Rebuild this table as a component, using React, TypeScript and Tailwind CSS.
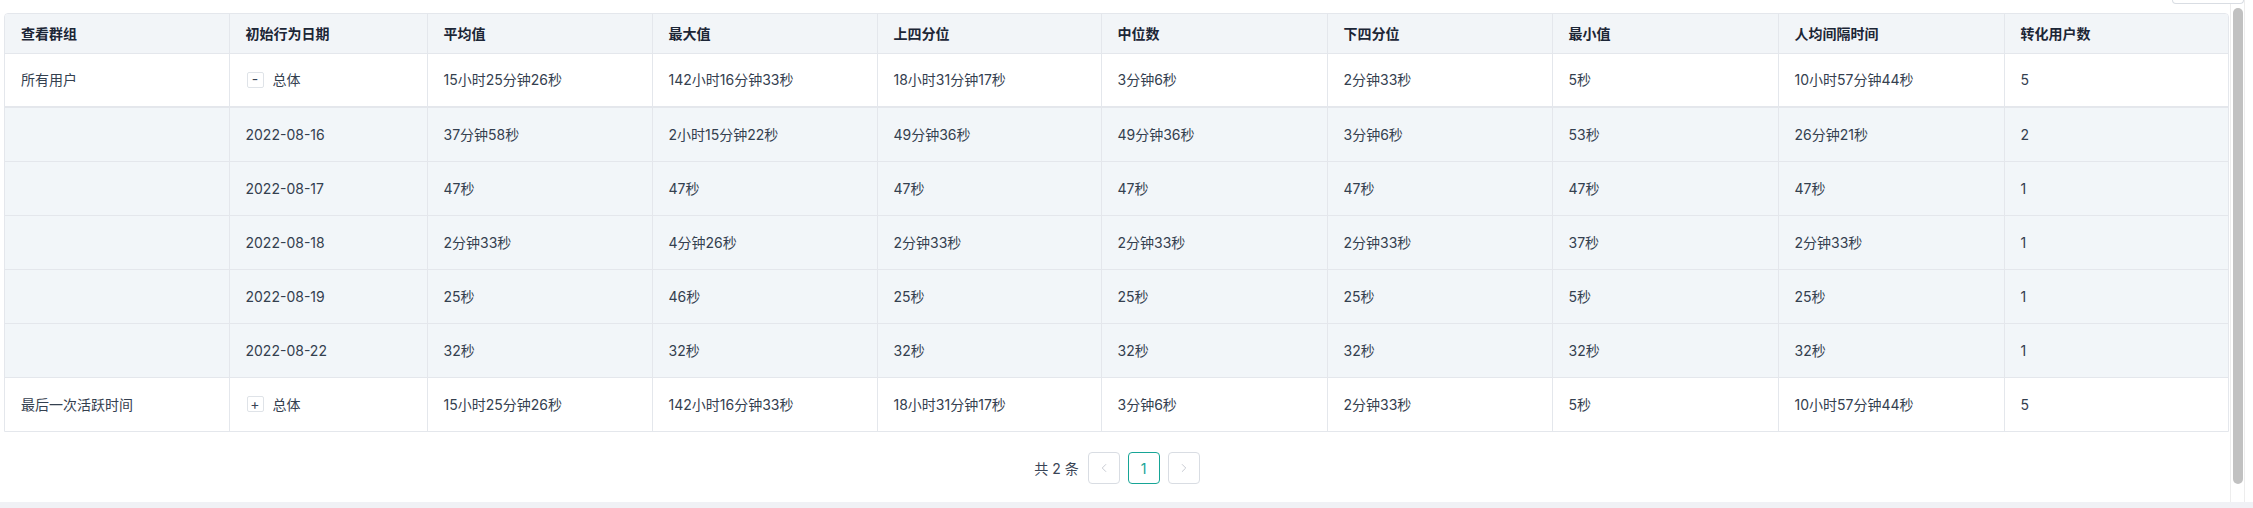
import { ChevronLeft, ChevronRight } from "lucide-react";

const columns = [
  "查看群组",
  "初始行为日期",
  "平均值",
  "最大值",
  "上四分位",
  "中位数",
  "下四分位",
  "最小值",
  "人均间隔时间",
  "转化用户数",
];

const widths = [224, 198, 225, 225, 224, 226, 225, 226, 226, 224];

type Row = {
  group: string;
  date: string;
  toggle?: "-" | "+";
  values: string[];
  detail?: boolean;
};

const rows: Row[] = [
  {
    group: "所有用户",
    date: "总体",
    toggle: "-",
    values: ["15小时25分钟26秒", "142小时16分钟33秒", "18小时31分钟17秒", "3分钟6秒", "2分钟33秒", "5秒", "10小时57分钟44秒", "5"],
  },
  { group: "", date: "2022-08-16", detail: true, values: ["37分钟58秒", "2小时15分钟22秒", "49分钟36秒", "49分钟36秒", "3分钟6秒", "53秒", "26分钟21秒", "2"] },
  { group: "", date: "2022-08-17", detail: true, values: ["47秒", "47秒", "47秒", "47秒", "47秒", "47秒", "47秒", "1"] },
  { group: "", date: "2022-08-18", detail: true, values: ["2分钟33秒", "4分钟26秒", "2分钟33秒", "2分钟33秒", "2分钟33秒", "37秒", "2分钟33秒", "1"] },
  { group: "", date: "2022-08-19", detail: true, values: ["25秒", "46秒", "25秒", "25秒", "25秒", "5秒", "25秒", "1"] },
  { group: "", date: "2022-08-22", detail: true, values: ["32秒", "32秒", "32秒", "32秒", "32秒", "32秒", "32秒", "1"] },
  {
    group: "最后一次活跃时间",
    date: "总体",
    toggle: "+",
    values: ["15小时25分钟26秒", "142小时16分钟33秒", "18小时31分钟17秒", "3分钟6秒", "2分钟33秒", "5秒", "10小时57分钟44秒", "5"],
  },
];

function Toggle({ sign }: { sign: string }) {
  return (
    <span className="inline-flex h-[16px] w-[17px] items-center justify-center rounded-[2px] border border-[#dfe3e8] bg-white pb-[1px] text-[14px] leading-none text-[#3a4556]">
      {sign}
    </span>
  );
}

export default function App() {
  return (
    <div
      className="relative flex h-[508px] w-[2253px] flex-col bg-white text-[14px] text-[#34404f]"
      style={{ fontFamily: 'Inter, "Noto Sans CJK SC", "Noto Sans", sans-serif' }}
    >
      {/* dropdown edge peeking in at the top right */}
      <div className="absolute right-[9px] top-0 h-[4px] w-[72px] rounded-b-[4px] border border-t-0 border-[#d9dde3] bg-white" />

      <div className="flex min-h-0 flex-1">
        <div className="w-[2230px] pl-[4px] pt-[13px]">
          <div className="w-[2225px] overflow-hidden rounded-t-[4px] border border-[#e4e7ec]">
            <table className="w-full table-fixed border-collapse">
              <colgroup>
                {widths.map((w, i) => (
                  <col key={i} style={{ width: w }} />
                ))}
              </colgroup>
              <thead>
                <tr className="bg-[#f2f5f8]">
                  {columns.map((c, i) => (
                    <th
                      key={c}
                      className={`h-[39px] border-b border-[#e4e7ec] px-[16px] text-left text-[14px] font-semibold text-[#1c2636] ${
                        i < columns.length - 1 ? "border-r" : ""
                      }`}
                    >
                      {c}
                    </th>
                  ))}
                </tr>
              </thead>
              <tbody>
                {rows.map((r, ri) => {
                  const last = ri === rows.length - 1;
                  const cells = [r.group, r.date, ...r.values];
                  return (
                    <tr key={ri} className={r.detail ? "bg-[#f2f6f9]" : "bg-white"}>
                      {cells.map((c, ci) => (
                        <td
                          key={ci}
                          className={`h-[54px] border-[#e4e7ec] px-[16px] ${
                            ci < cells.length - 1 ? "border-r" : ""
                          } ${ri === 0 ? "border-b-2" : last ? "" : "border-b"}`}
                        >
                          {ci === 1 && r.toggle ? (
                            <span className="flex items-center gap-[9px] pl-[1px]">
                              <Toggle sign={r.toggle} />
                              {c}
                            </span>
                          ) : (
                            c
                          )}
                        </td>
                      ))}
                    </tr>
                  );
                })}
              </tbody>
            </table>
          </div>

          <div className="mt-[20px] flex items-center justify-center gap-[8px]">
            <span className="mr-[1px] text-[14px] text-[#3a4556]">共 2 条</span>
            <button className="flex h-[32px] w-[32px] items-center justify-center rounded-[4px] border border-[#d9dde3] bg-white text-[#c0c4cc]">
              <ChevronLeft size={14} strokeWidth={1.5} />
            </button>
            <button className="flex h-[32px] w-[32px] items-center justify-center rounded-[4px] border border-[#16a596] bg-white text-[14px] text-[#16a596]">
              1
            </button>
            <button className="flex h-[32px] w-[32px] items-center justify-center rounded-[4px] border border-[#d9dde3] bg-white text-[#c0c4cc]">
              <ChevronRight size={14} strokeWidth={1.5} />
            </button>
          </div>
        </div>

        {/* scrollbar */}
        <div className="w-[15px] border-x border-[#ededed] pb-[18px] pl-[2px] pt-[8px]">
          <div className="h-full w-[10px] rounded-full bg-[#c1c1c1]" />
        </div>
      </div>

      <div className="h-[6px] bg-[#f0f1f5]" />
    </div>
  );
}
